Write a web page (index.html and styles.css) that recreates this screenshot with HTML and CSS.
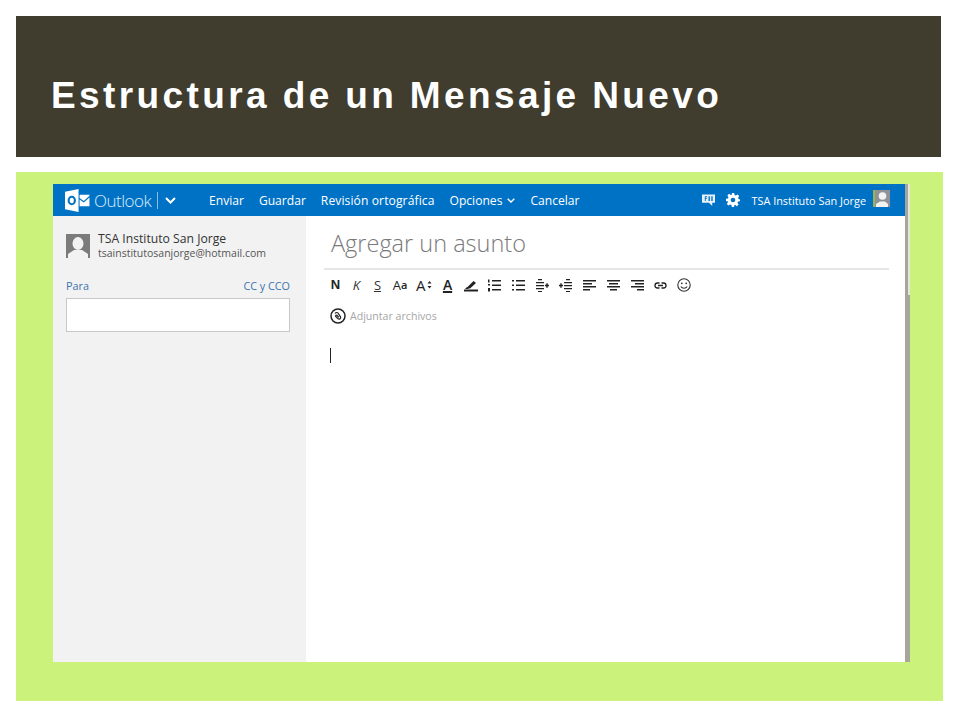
FILE: index.html
```html
<!DOCTYPE html>
<html lang="es">
<head>
<meta charset="utf-8">
<title>Estructura de un Mensaje Nuevo</title>
<link rel="stylesheet" href="styles.css">
</head>
<body>
<header class="banner"><h1>Estructura de un Mensaje Nuevo</h1></header>
<section class="stage">
  <div class="window">
    <div class="app">
      <nav class="topbar">
        <svg class="logo" width="25" height="25" viewBox="0 0 24 24">
          <path fill="#fff" d="M0 3.500 13 1v22L0 20.500z"/>
          <path fill="#fff" d="M14 6.500h9.500v1L18 12.500l-4-3z"/>
          <path fill="#fff" d="M14 11l4 3 5.500-4.800V17.500H14z"/>
          <ellipse cx="6.500" cy="12" rx="3" ry="3.600" fill="none" stroke="#0072c6" stroke-width="2"/>
        </svg>
        <span class="brand">Outlook</span>
        <span class="divider"></span>
        <svg class="chev" width="11" height="7" viewBox="0 0 11 7"><path d="M1 1l4.500 4.500L10 1" fill="none" stroke="#fff" stroke-width="2"/></svg>
        <a class="cmd cmd-first">Enviar</a>
        <a class="cmd">Guardar</a>
        <a class="cmd cmd-wide">Revisión ortográfica</a>
        <a class="cmd cmd-options">Opciones <svg width="8" height="5" viewBox="0 0 8 5"><path d="M.7.7 4 4 7.300.7" fill="none" stroke="#fff" stroke-width="1.400"/></svg></a>
        <a class="cmd">Cancelar</a>
        <span class="spacer"></span>
        <svg class="fb" width="13" height="14" viewBox="0 0 14 14"><path fill="#e8f1fa" d="M0 1h14v9h-3v3.500L7.500 10H0z"/><path fill="#0072c6" d="M3 3h2.500v1H4v1h1.500v1H4v2H3zM7 3h1.500v5H7zM10 3h1.500v5H10z"/></svg>
        <svg class="gear" width="14" height="14" viewBox="0 0 24 24"><path fill="#fff" fill-rule="evenodd" d="M10 0h4l.7 3.400 2.200.9L19.800 2.400l2.800 2.800-1.900 2.900.9 2.200L24 11v3l-3.400.7-.9 2.200 1.900 2.900-2.800 2.800-2.900-1.900-2.200.9L14 24h-4l-.7-3.400-2.200-.9-2.900 1.900-2.800-2.800 1.900-2.900-.9-2.200L0 14v-4l3.400-.7.9-2.200L2.400 4.200l2.800-2.800 2.900 1.900 2.200-.9zM12 8a4 4 0 1 0 0 8 4 4 0 0 0 0-8z"/></svg>
        <span class="user">TSA Instituto San Jorge</span>
        <svg class="top-avatar" width="17" height="17" viewBox="0 0 17 17"><rect width="17" height="17" fill="#8f9296"/><rect width="2" height="17" fill="#9cb54a"/><circle cx="9.500" cy="6" r="3.800" fill="#f3f3f3"/><path fill="#f3f3f3" d="M3 17v-3l4-2.500h5l3 2.500v3z"/></svg>
      </nav>
      <div class="panes">
        <aside class="side">
          <div class="account">
            <svg width="24" height="24" viewBox="0 0 24 24"><rect width="24" height="24" fill="#7b7b7b"/><ellipse cx="12" cy="9.500" rx="5.500" ry="6.500" fill="#f2f2f2"/><path fill="#f2f2f2" d="M2 24v-4l6-4h8l6 4v4z"/></svg>
            <div>
              <div class="acct-name">TSA Instituto San Jorge</div>
              <div class="acct-mail">tsainstitutosanjorge@hotmail.com</div>
            </div>
          </div>
          <div class="to-row"><span>Para</span><span>CC y CCO</span></div>
          <div class="to-box"></div>
        </aside>
        <main class="compose">
          <div class="subject">Agregar un asunto</div>
          <div class="tools">
            <span class="t t-n">N</span>
            <span class="t t-k">K</span>
            <span class="t t-s">S</span>
            <span class="t t-aa">A<small>a</small></span>
            <span class="t t-ag">A<svg width="5" height="8" viewBox="0 0 5 8"><path d="M2.500 0l2 2.500h-4zM.5 5h4l-2 2.500z" fill="#222"/></svg></span>
            <span class="t t-au">A</span>
            <span class="t"><svg width="14" height="13" viewBox="0 0 14 13"><path d="M0 11.500h14" stroke="#222" stroke-width="2"/><path d="M4 9.500 3 8.500l6.500-6.500L12 4l-6 5.500zM1 10l2-2 1.500 1.500-.5.500z" fill="#222"/></svg></span>
            <span class="t"><svg width="13" height="13" viewBox="0 0 13 13"><path d="M0 .5h1.500v3H0zM0 5h2v1.500H0zM0 9h2v3.500H0zM4 1h9v1.500H4zM4 5.500h9V7H4zM4 10h9v1.500H4z" fill="#222"/></svg></span>
            <span class="t"><svg width="13" height="13" viewBox="0 0 13 13"><path d="M0 1h2v1.500H0zM0 5.500h2V7H0zM0 10h2v1.500H0zM4 1h9v1.500H4zM4 5.500h9V7H4zM4 10h9v1.500H4z" fill="#222"/></svg></span>
            <span class="t"><svg width="13" height="13" viewBox="0 0 13 13"><path d="M2 0h4v1.300H2zM0 3h8v1.300H0zM0 6h8v1.300H0zM0 9h8v1.300H0zM2 12h4v1H2zM9 5.800h1.300V4.300h1.400v1.500H13v1.400h-1.300v1.500h-1.400V7.200H9z" fill="#222"/></svg></span>
            <span class="t"><svg width="13" height="13" viewBox="0 0 13 13"><path d="M7 0h4v1.300H7zM5 3h8v1.300H5zM5 6h8v1.300H5zM5 9h8v1.300H5zM7 12h4v1H7zM0 5.800h1.300V4.300h1.400v1.500H4v1.400H2.700v1.500H1.300V7.200H0z" fill="#222"/></svg></span>
            <span class="t"><svg width="13" height="13" viewBox="0 0 13 13"><path d="M0 1h13v1.500H0zM0 4h9v1.500H0zM0 7h13v1.500H0zM0 10h7v1.500H0z" fill="#222"/></svg></span>
            <span class="t"><svg width="13" height="13" viewBox="0 0 13 13"><path d="M0 1h13v1.500H0zM2 4h9v1.500H2zM0 7h13v1.500H0zM3 10h7v1.500H3z" fill="#222"/></svg></span>
            <span class="t"><svg width="13" height="13" viewBox="0 0 13 13"><path d="M0 1h13v1.500H0zM4 4h9v1.500H4zM0 7h13v1.500H0zM6 10h7v1.500H6z" fill="#222"/></svg></span>
            <span class="t"><svg width="13" height="13" viewBox="0 0 13 13"><path d="M5.500 4H3.500a2.500 2.500 0 0 0 0 5h2M7.500 4h2a2.500 2.500 0 0 1 0 5h-2M4 6.500h5" fill="none" stroke="#222" stroke-width="1.300"/></svg></span>
            <span class="t"><svg width="14" height="14" viewBox="0 0 14 14"><circle cx="7" cy="7" r="6.200" fill="none" stroke="#333" stroke-width="1.100"/><circle cx="4.800" cy="5.300" r=".9" fill="#333"/><circle cx="9.200" cy="5.300" r=".9" fill="#333"/><path d="M3.800 8.500c1.500 2.300 4.900 2.300 6.400 0" fill="none" stroke="#333" stroke-width="1.100"/></svg></span>
          </div>
          <div class="attach">
            <svg width="16" height="16" viewBox="0 0 16 16"><circle cx="8" cy="8" r="7" fill="none" stroke="#222" stroke-width="1.500"/><path d="M5 5.500c1-1.500 3-1.200 3.500.3l2 3c.8 1.500-1 3-2.400 2L5.800 8.500c-.7-.8.3-1.800 1.100-1.200l2 2" fill="none" stroke="#222" stroke-width="1.200"/></svg>
            <span>Adjuntar archivos</span>
          </div>
          <div class="caret"></div>
        </main>
      </div>
    </div>
    <div class="scroll"><div class="thumb"></div></div>
  </div>
</section>
</body>
</html>
```

FILE: styles.css
```css
* { box-sizing: border-box; }
html, body { margin: 0; height: 100%; background: #fff; }
body {
  padding: 16px 17px 0 16px;
  width: 960px;
  height: 720px;
  overflow: hidden;
  font-family: "Open Sans", "Noto Sans", sans-serif;
}
.banner {
  width: 925px;
  height: 141px;
  background: #403c2e;
  display: flex;
  align-items: flex-end;
  padding: 0 0 40px 35px;
}
.banner h1 {
  margin: 0;
  color: #fff;
  font: bold 37px/1.1 "Liberation Sans", sans-serif;
  letter-spacing: 3.4px;
  word-spacing: -1.100px;
  white-space: nowrap;
}
.stage {
  margin-top: 15px;
  width: 927px;
  height: 529px;
  background: #cbf27a;
  padding: 12px 33px 39px 37px;
}
.window { display: flex; height: 478px; }
.app { width: 852px; display: flex; flex-direction: column; background: #fff; }
.topbar {
  height: 32px;
  flex: none;
  background: #0072c6;
  color: #fff;
  display: flex;
  align-items: center;
  padding-left: 12px;
  font-size: 12.100px;
  white-space: nowrap;
}
.logo { margin-right: 4px; }
.brand { font-size: 17px; font-weight: 300; letter-spacing: -.5px; color: #dcecf8; width: 55px; }
.divider { width: 1px; height: 17px; background: #8dc0e6; margin-left: 8px; }
.chev { margin: 0 0 0 7px; }
.cmd { margin-left: 15px; display: inline-flex; align-items: center; gap: 4px; }
.cmd-first { margin-left: 33px; }
.cmd-wide { letter-spacing: .1px; }
.cmd-options { gap: 5px; }
.spacer { flex: 1; }
.fb { margin-right: 11px; }
.gear { margin-right: 11px; }
.user { font-size: 10.900px; margin-right: 7px; }
.top-avatar { margin-right: 15px; margin-top: -3px; }
.panes { flex: 1; display: flex; min-height: 0; }
.side {
  width: 253px;
  flex: none;
  background: #f2f2f2;
  padding: 16px 16px 0 13px;
}
.account { display: flex; gap: 8px; align-items: flex-start; color: #333; height: 45px; }
.account svg { margin-top: 2px; flex: none; }
.acct-name { font-size: 12.200px; line-height: 14px; margin-top: 0; }
.acct-mail { font-size: 10.500px; line-height: 15px; color: #555; }
.to-row {
  display: flex;
  justify-content: space-between;
  font-size: 10.800px;
  line-height: 14px;
  color: #3b74ad;
  padding-top: 2px;
}
.to-box {
  height: 34px;
  margin-top: 5px;
  background: #fff;
  border: 1px solid #c8c8c8;
}
.compose { flex: 1; padding: 10px 16px 0 18px; min-width: 0; }
.subject {
  font-size: 23.500px;
  line-height: 34px;
  font-weight: 300;
  color: #7a7a7a;
  padding-left: 7px;
  height: 44px;
  border-bottom: 2px solid #e6e6e6;
}
.tools { display: flex; align-items: center; height: 26px; margin: 2px 0 0 1px; color: #222; }
.t {
  width: 23.700px;
  flex: none;
  display: inline-flex;
  align-items: center;
  justify-content: center;
  font-size: 12px;
  line-height: 14px;
}
.t-n { width: 21px; font-weight: 800; font-size: 13px; font-family: "Liberation Sans", sans-serif; }
.t-k { width: 21px; font-style: italic; font-size: 13px; color: #333; }
.t-s { width: 21px; text-decoration: underline; font-size: 13px; color: #333; }
.t-aa { width: 24px; font-size: 13px; }
.t-aa small { font-size: 11px; font-weight: 600; }
.t-ag { font-size: 15px; gap: 1px; }
.t-au { font-size: 14px; font-weight: 600; text-decoration: underline; text-decoration-thickness: 2px; }
.attach {
  display: flex;
  align-items: center;
  gap: 4px;
  margin: 10px 0 0 6px;
  font-size: 10.600px;
  color: #a6a6a6;
}
.caret { width: 1px; height: 15px; background: #222; margin: 24px 0 0 6px; }
.scroll { width: 5px; background: #a8a59c; }
.thumb { height: 111px; background: linear-gradient(to right, #aaa59c 0 60%, #e6e5df 60%); }
```
